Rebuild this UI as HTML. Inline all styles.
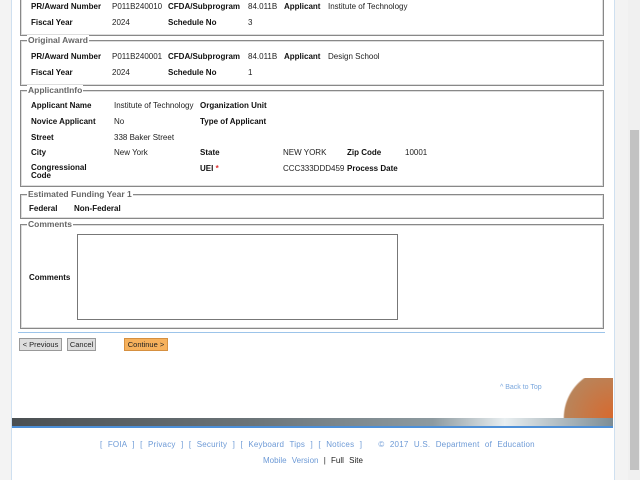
<!DOCTYPE html><html><head><style>
body{margin:0;width:640px;height:480px;overflow:hidden;background:#f3f3f3;font-family:"Liberation Sans",sans-serif;font-size:8px;color:#222;position:relative}
.pg{position:absolute;left:11px;top:0;width:602px;height:480px;background:#fff;border-left:1px solid #cfe0f0;border-right:1px solid #cfe0f0}
.fs{position:absolute;left:20px;width:582px;border:1px solid #888;border-top:1px solid #888;box-shadow:inset 0 0 0 1px #ddd}
.lg{position:absolute;top:-6px;left:6px;background:#fff;color:#666;font-weight:bold;font-size:8.5px;padding:0 1px}
.t{position:absolute;white-space:nowrap}
.b{font-weight:bold;color:#111}
.btn{position:absolute;top:338px;height:11px;border:1px solid #999;background:#ddd;font-size:7.5px;line-height:11px;text-align:center}
</style></head><body>
<div class="pg"></div>
<div class="fs" style="top:-2px;height:36px"></div>
<div class="fs" style="top:40px;height:44px"><span class="lg">Original Award</span></div>
<div class="fs" style="top:90px;height:95px"><span class="lg">ApplicantInfo</span></div>
<div class="fs" style="top:194px;height:23px"><span class="lg">Estimated Funding Year 1</span></div>
<div class="fs" style="top:224px;height:103px"><span class="lg">Comments</span></div>
<div class="t b" style="left:31px;top:2px">PR/Award Number</div><div class="t" style="left:112px;top:2px">P011B240010</div><div class="t b" style="left:168px;top:2px">CFDA/Subprogram</div><div class="t" style="left:248px;top:2px">84.011B</div><div class="t b" style="left:284px;top:2px">Applicant</div><div class="t" style="left:328px;top:2px">Institute of Technology</div>
<div class="t b" style="left:31px;top:18px">Fiscal Year</div><div class="t" style="left:112px;top:18px">2024</div><div class="t b" style="left:168px;top:18px">Schedule No</div><div class="t" style="left:248px;top:18px">3</div>
<div class="t b" style="left:31px;top:52px">PR/Award Number</div><div class="t" style="left:112px;top:52px">P011B240001</div><div class="t b" style="left:168px;top:52px">CFDA/Subprogram</div><div class="t" style="left:248px;top:52px">84.011B</div><div class="t b" style="left:284px;top:52px">Applicant</div><div class="t" style="left:328px;top:52px">Design School</div>
<div class="t b" style="left:31px;top:68px">Fiscal Year</div><div class="t" style="left:112px;top:68px">2024</div><div class="t b" style="left:168px;top:68px">Schedule No</div><div class="t" style="left:248px;top:68px">1</div>
<div class="t b" style="left:31px;top:101px">Applicant Name</div><div class="t" style="left:114px;top:101px">Institute of Technology</div><div class="t b" style="left:200px;top:101px">Organization Unit</div>
<div class="t b" style="left:31px;top:117px">Novice Applicant</div><div class="t" style="left:114px;top:117px">No</div><div class="t b" style="left:200px;top:117px">Type of Applicant</div>
<div class="t b" style="left:31px;top:133px">Street</div><div class="t" style="left:114px;top:133px">338 Baker Street</div>
<div class="t b" style="left:31px;top:148px">City</div><div class="t" style="left:114px;top:148px">New York</div><div class="t b" style="left:200px;top:148px">State</div><div class="t" style="left:283px;top:148px">NEW YORK</div><div class="t b" style="left:347px;top:148px">Zip Code</div><div class="t" style="left:405px;top:148px">10001</div>
<div class="t b" style="left:31px;top:164px;line-height:8px">Congressional<br>Code</div><div class="t b" style="left:200px;top:164px">UEI <span style="color:#d33">*</span></div><div class="t" style="left:283px;top:164px">CCC333DDD459</div><div class="t b" style="left:347px;top:164px">Process Date</div>
<div class="t b" style="left:29px;top:204px">Federal</div><div class="t b" style="left:74px;top:204px">Non-Federal</div>
<div class="t b" style="left:29px;top:273px">Comments</div>
<div style="position:absolute;left:77px;top:234px;width:319px;height:84px;border:1px solid #777"></div>
<div style="position:absolute;left:18px;top:332px;width:587px;height:1px;background:#9cc4ea"></div>
<div class="btn" style="left:19px;width:41px">&lt; Previous</div>
<div class="btn" style="left:67px;width:27px">Cancel</div>
<div class="btn" style="left:124px;width:42px;background:#f6b15c;border-color:#d69040">Continue &gt;</div>
<div class="t" style="left:500px;top:384px;font-size:7px;color:#7aa7dd">^ Back to Top</div>
<div style="position:absolute;left:543px;top:378px;width:70px;height:40px;background:radial-gradient(circle at 100% 100%,#d7692e 0,#b9845a 60%,transparent 62%)"></div>
<div style="position:absolute;left:12px;top:418px;width:601px;height:8px;background:linear-gradient(90deg,#4a4f52,#6b7478 40%,#8d9aa0 70%,#e8eef0 82%,#7c8c94)"></div>
<div style="position:absolute;left:12px;top:426px;width:601px;height:2px;background:#4c8fd8"></div>
<div class="t" style="left:100px;top:440px;color:#6d9ad6;word-spacing:3px;letter-spacing:0.2px">[ FOIA ] [ Privacy ] [ Security ] [ Keyboard Tips ] [ Notices ] &nbsp; © 2017 U.S. Department of Education</div>
<div class="t" style="left:263px;top:456px;word-spacing:3px"><span style="color:#6d9ad6">Mobile Version</span> | Full Site</div>
<div style="position:absolute;left:628px;top:0;width:12px;height:480px;background:#f0f0f0"></div>
<div style="position:absolute;left:630px;top:130px;width:9px;height:340px;background:#c2c2c2"></div>
</body></html>
